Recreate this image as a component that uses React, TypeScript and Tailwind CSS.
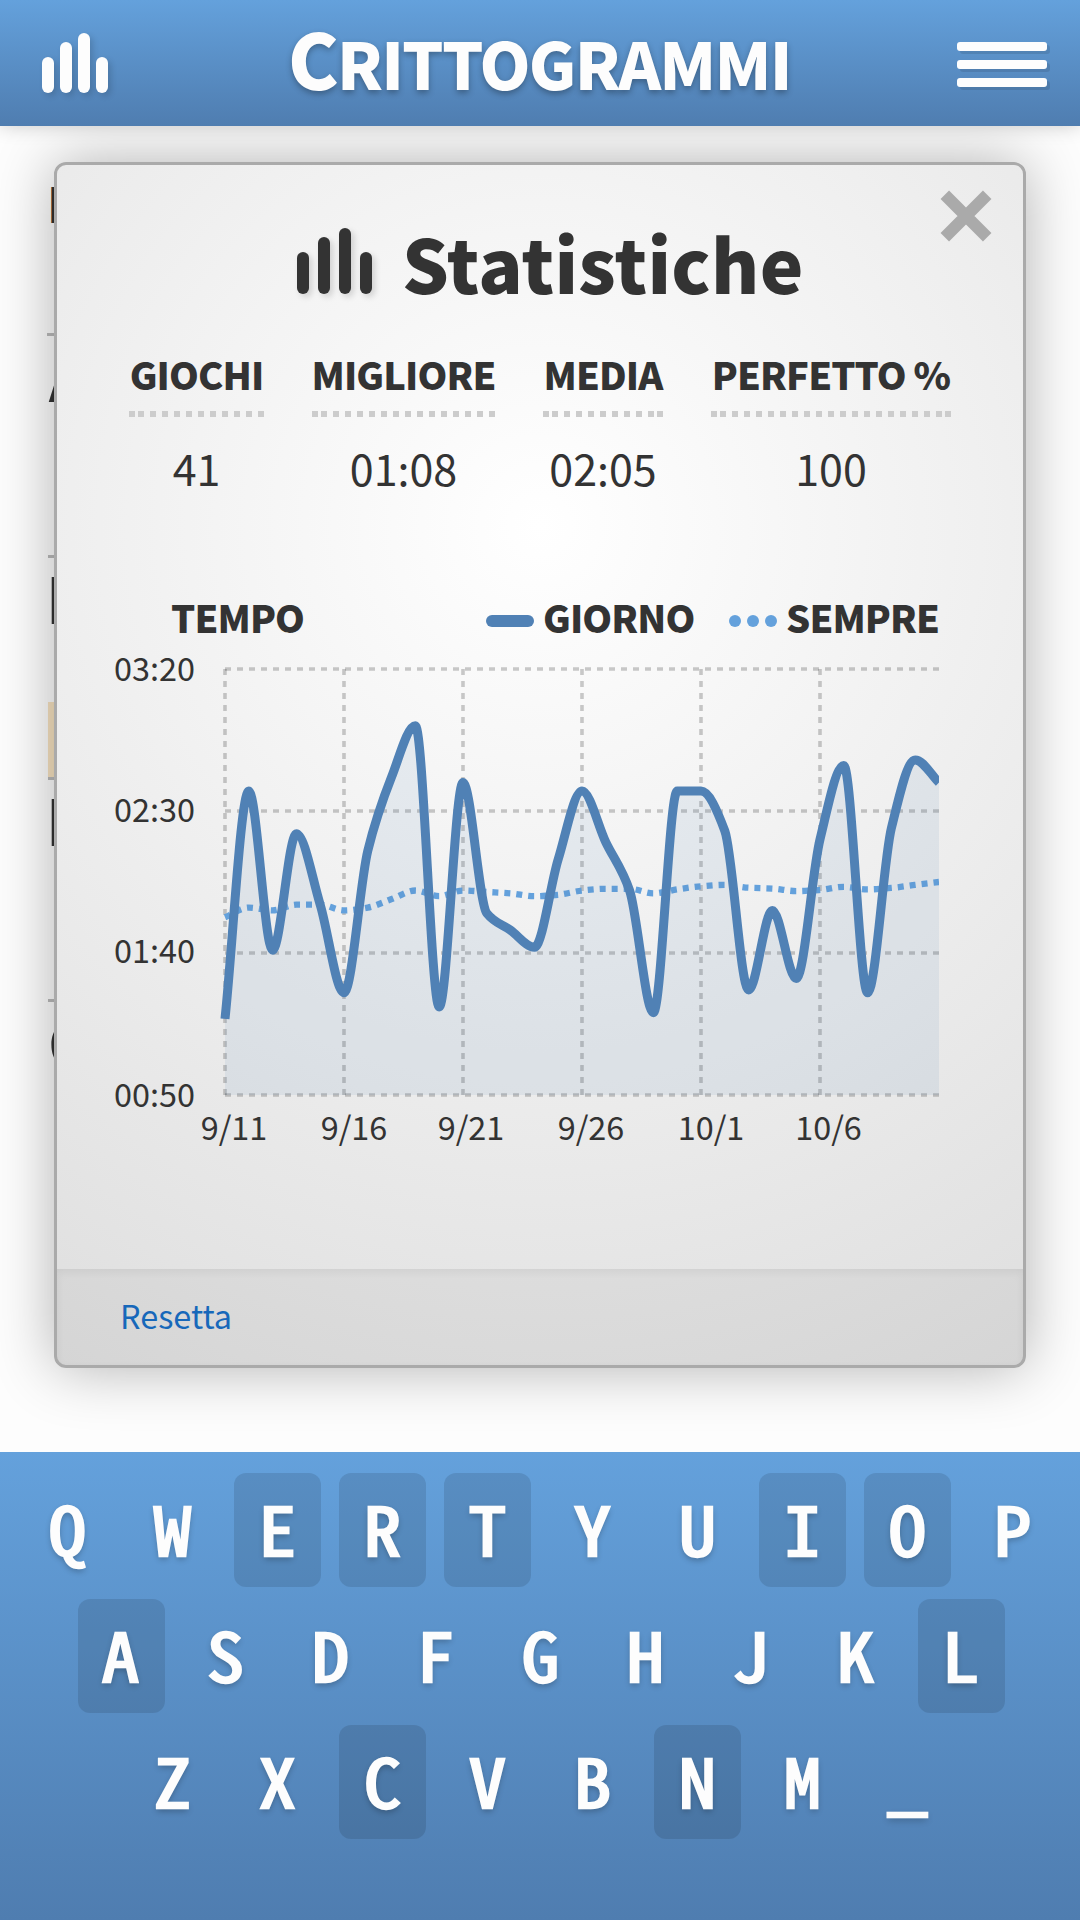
const stats = [
  { label: 'GIOCHI', value: '41', width: 135, className: 'w-[135px]' },
  { label: 'MIGLIORE', value: '01:08', width: 183, className: 'w-[183px]' },
  { label: 'MEDIA', value: '02:05', width: 120, className: 'w-[120px]' },
  { label: 'PERFETTO %', value: '100', width: 240, className: 'w-[240px]' },
];

const keyRows = [
  { keys: 'QWERTYUIOP', row: '', key: '' },
  { keys: 'ASDFGHJKL', row: 'pl-[3px]', key: 'pr-[3px]' },
  { keys: 'ZXCVBNM_', row: '', key: '' },
];
const usedKeys = 'ERTIOALCN';

const puzzleRows = [
  { letter: 'A', indent: 'pl-px', cell: 'w-40 border-[#bbb]' },
  { letter: 'E', indent: '-ml-0.5', cell: 'w-40 border-[#bbb] bg-[#f7e3c1]' },
  { letter: 'E', indent: '-ml-0.5', cell: 'w-40 border-[#bbb]' },
  { letter: 'C', indent: 'pl-0', cell: 'w-0 border-transparent' },
];

// Seconds per day, and the all-time average as it moved
const daily = [
  76.8, 157, 101, 142, 117, 86, 136, 162, 180, 81, 160, 114, 108, 102, 133, 157, 139, 122, 79, 157, 157, 143, 87, 115,
  91, 140, 166, 86, 144, 168, 160,
];
const average = [
  112.6, 116, 115, 117, 117, 115, 116, 119, 122, 120, 122, 121.5, 121, 120, 120.5, 122, 122.6, 122.6, 121, 122.4, 123.5,
  124, 123, 122.7, 121.8, 122.2, 123.3, 122.4, 122.9, 124, 125,
];

const X0 = 225;
const STEP = 23.8;
const toY = (seconds: number) => 1095 - (seconds - 50) * 2.84;

const yLabels = [
  { text: '03:20', y: 669, base: 681 },
  { text: '02:30', y: 811, base: 822 },
  { text: '01:40', y: 953, base: 963 },
  { text: '00:50', y: 1095, base: 1107 },
];
const xLabels = [
  { text: '9/11', x: 225, center: 234 },
  { text: '9/16', x: 344, center: 354 },
  { text: '9/21', x: 463, center: 471 },
  { text: '9/26', x: 582, center: 591 },
  { text: '10/1', x: 701, center: 711 },
  { text: '10/6', x: 820, center: 828.5 },
];

// Monotone cubic interpolation
function smoothPath(values: number[]) {
  const ys = values.map(toY);
  const n = ys.length;
  const d = ys.slice(1).map((y, i) => (y - ys[i]) / STEP);
  const m = ys.map((_, i) => {
    if (i === 0) return d[0];
    if (i === n - 1) return d[n - 2];
    if (d[i - 1] * d[i] <= 0) return 0;
    return (2 * d[i - 1] * d[i]) / (d[i - 1] + d[i]);
  });
  let path = `M${X0},${ys[0]}`;
  for (let i = 0; i < n - 1; i++) {
    const x = X0 + i * STEP;
    const t = STEP / 3;
    path += ` C${x + t},${ys[i] + m[i] * t} ${x + STEP - t},${ys[i + 1] - m[i + 1] * t} ${x + STEP},${ys[i + 1]}`;
  }
  return path;
}

function DottedRule({ width }: { width: number }) {
  const dots = [0];
  for (let x = 9; x <= width - 6; x += 12) dots.push(x);
  dots.push(width - 6);
  return (
    <svg width={width} height={6} className="mt-[13px] block fill-[#ccc]" shapeRendering="crispEdges">
      {dots.map((x, index) => (
        <rect key={index} x={x} width={6} height={6} />
      ))}
    </svg>
  );
}

function Chart() {
  const line = smoothPath(daily);
  return (
    <svg width={966} height={520} viewBox="57 640 966 520" className="-mt-px block">
      <defs>
        <clipPath id="plot">
          <rect x={200} y={640} width={739} height={500} />
        </clipPath>
      </defs>
      <g stroke="#000" strokeOpacity={0.2} strokeWidth={3.6} strokeDasharray="6 6">
        {yLabels.map((label) => (
          <path key={label.text} d={`M225,${label.y}H939`} />
        ))}
        {xLabels.map((label) => (
          <path key={label.text} d={`M${label.x},669V1095`} />
        ))}
      </g>
      <g clipPath="url(#plot)" fill="none">
        <path d={smoothPath(average)} stroke="#64a1dc" strokeWidth={6.3} strokeDasharray="6 6" />
        <path d={`${line} V1095 H225 Z`} fill="#5081b5" fillOpacity={0.1} />
        <path d={line} stroke="#5081b5" strokeWidth={9} />
      </g>
      <g className="fill-[#333] text-[32.4px]">
        {yLabels.map((label) => (
          <text key={label.text} x={195} y={label.base} textAnchor="end">
            {label.text}
          </text>
        ))}
        {xLabels.map((label) => (
          <text key={label.text} x={label.center} y={1140} textAnchor="middle">
            {label.text}
          </text>
        ))}
      </g>
    </svg>
  );
}

export default function App() {
  return (
    <div className="relative flex h-[1920px] w-[1080px] flex-col overflow-hidden bg-[#fdfdfd] font-['Noto_Sans_CJK_JP','Noto_Sans',sans-serif] text-[#333] antialiased">
      {/* Header */}
      <header className="relative z-20 flex h-[126px] shrink-0 bg-linear-to-b from-[#64a1dc] to-[#4f7db0] shadow-[0_0_18px_rgba(0,0,0,0.2)]">
        <div className="ml-[42px] mt-[33px] flex h-[60px] w-[66px] items-end gap-[6px]">
          <span className="h-9 w-3 rounded-full bg-[#fdfdfd] shadow-[3px_3px_6px_rgba(0,0,0,0.15)]" />
          <span className="h-[51px] w-3 rounded-full bg-[#fdfdfd] shadow-[3px_3px_6px_rgba(0,0,0,0.15)]" />
          <span className="h-[60px] w-3 rounded-full bg-[#fdfdfd] shadow-[3px_3px_6px_rgba(0,0,0,0.15)]" />
          <span className="h-9 w-3 rounded-full bg-[#fdfdfd] shadow-[3px_3px_6px_rgba(0,0,0,0.15)]" />
        </div>
        <h1 className="ml-[180px] w-[510px] whitespace-nowrap text-[76px] leading-[114px] font-black tracking-[-1.8px] text-[#fdfdfd] [text-shadow:0_3px_6px_rgba(0,0,0,0.3)]">
          C<span className="text-[65px]">RITTOGRAMMI</span>
        </h1>
        <div className="ml-auto mr-[33px] mt-[42px] flex w-[90px] flex-col gap-[9px]">
          <span className="h-[9px] rounded-[3px] bg-[#fdfdfd] shadow-[3px_3px_0_rgba(0,0,0,0.1)]" />
          <span className="h-[9px] rounded-[3px] bg-[#fdfdfd] shadow-[3px_3px_0_rgba(0,0,0,0.1)]" />
          <span className="h-[9px] rounded-[3px] bg-[#fdfdfd] shadow-[3px_3px_0_rgba(0,0,0,0.1)]" />
        </div>
      </header>

      {/* Puzzle, mostly covered by the dialog */}
      <main className="flex flex-1 flex-col pl-12">
        <div className="-ml-px h-[210px] w-40 border-b-[3px] border-[#bbb] pt-[46px] text-[48px] leading-[60px] font-bold">D</div>
        {puzzleRows.map((row, index) => (
          <div key={index} className="h-[222px] shrink-0">
            <div className={`h-[144px] text-[63px] leading-[77px] font-bold ${row.indent}`}>{row.letter}</div>
            <div className={`h-[78px] border-b-[3px] ${row.cell}`} />
          </div>
        ))}
      </main>

      {/* Dialog */}
      <section className="absolute left-[54px] top-[162px] z-10 flex h-[1206px] w-[972px] flex-col overflow-hidden rounded-xl border-[3px] border-[#aaa] bg-[radial-gradient(circle_at_50%_30%,#fff,#dedede)] shadow-[0_0_60px_rgba(0,0,0,0.3)]">
        <svg className="absolute right-[31px] top-[25px]" width={52} height={52} viewBox="0 0 52 52">
          <path d="M4.8,4.8L47.2,47.2M47.2,4.8L4.8,47.2" stroke="#aaa" strokeWidth={12} />
        </svg>
        <div className="flex pl-[240px] pt-[47px]">
          <div className="mt-4 flex h-[66px] w-[75px] items-end gap-[9px]">
            <span className="h-[42px] w-3 rounded-full bg-[#333] shadow-[3px_3px_6px_rgba(0,0,0,0.15)]" />
            <span className="h-[57px] w-3 rounded-full bg-[#333] shadow-[3px_3px_6px_rgba(0,0,0,0.15)]" />
            <span className="h-[66px] w-3 rounded-full bg-[#333] shadow-[3px_3px_6px_rgba(0,0,0,0.15)]" />
            <span className="h-[42px] w-3 rounded-full bg-[#333] shadow-[3px_3px_6px_rgba(0,0,0,0.15)]" />
          </div>
          <h2 className="ml-[30px] text-[73.5px] leading-[100px] font-black tracking-[0.3px]">Statistiche</h2>
        </div>

        <div className="mt-[38px] flex gap-12 pl-[72px]">
          {stats.map((stat) => (
            <div key={stat.label} className={`flex flex-col items-center whitespace-nowrap ${stat.className}`}>
              <div className="text-[38px] leading-[48px] font-black tracking-[-0.9px]">{stat.label}</div>
              <DottedRule width={stat.width} />
              <div className="mt-5 text-[43px] leading-[60px]">{stat.value}</div>
            </div>
          ))}
        </div>

        <div className="mt-[96px] flex items-center pl-[114px] text-[38px] leading-[48px] font-black tracking-[-0.9px]">
          <span className="w-[315px]">TEMPO</span>
          <span className="mb-[-8px] h-3 w-12 rounded-full bg-[#5081b5]" />
          <span className="ml-[9px] w-[186px]">GIORNO</span>
          <span className="mb-[-8px] flex gap-[6px]">
            <span className="size-3 rounded-full bg-[#64a1dc]" />
            <span className="size-3 rounded-full bg-[#64a1dc]" />
            <span className="size-3 rounded-full bg-[#64a1dc]" />
          </span>
          <span className="ml-[9px]">SEMPRE</span>
        </div>
        <Chart />

        <div className="mt-auto flex h-24 shrink-0 items-center bg-black/4 pb-1 pl-[63px] shadow-[inset_0_3px_9px_rgba(0,0,0,0.06)]">
          <button className="text-[32.4px] leading-[48px] text-[#1768ba]">Resetta</button>
        </div>
      </section>

      {/* Keyboard */}
      <div className="relative z-20 flex h-[468px] shrink-0 flex-col gap-3 bg-linear-to-b from-[#64a1dc] to-[#4f7db0] pt-[21px]">
        {keyRows.map((row) => (
          <div key={row.keys} className={`flex justify-center gap-[18px] ${row.row}`}>
            {row.keys.split('').map((key) => (
              <button
                key={key}
                className={`h-[114px] w-[87px] rounded-xl pb-[6px] font-['Noto_Sans_Mono_CJK_JP','Noto_Sans_CJK_JP',monospace] text-[66px] leading-[100px] text-[#fdfdfd] [-webkit-text-stroke:2.4px_#fdfdfd] [text-shadow:0_3px_6px_rgba(0,0,0,0.3)] ${row.key} ${
                  usedKeys.includes(key) ? 'bg-black/11' : ''
                }`}
              >
                <span className={`inline-block ${key === '_' ? 'scale-x-[1.45]' : 'scale-x-[1.13]'}`}>{key}</span>
              </button>
            ))}
          </div>
        ))}
      </div>
    </div>
  );
}
